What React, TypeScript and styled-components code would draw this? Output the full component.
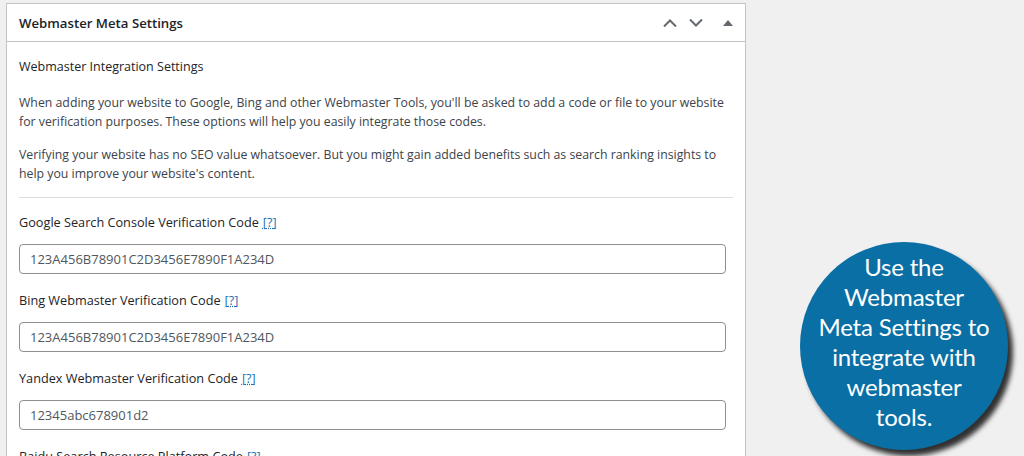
import React from 'react'
import styled, { createGlobalStyle } from 'styled-components'

const GlobalStyle = createGlobalStyle`
  html, body {
    margin: 0;
    padding: 0;
    background: #f0f0f1;
    font-family: "Open Sans", "Noto Sans", sans-serif;
    overflow: hidden;
  }
`

const Page = styled.div`
  display: flex;
  align-items: flex-start;
  width: 1024px;
  height: 456px;
  padding: 3px 0 0 6px;
  box-sizing: border-box;
  overflow: hidden;
`

const Panel = styled.div`
  width: 740px;
  flex-shrink: 0;
  background: #fff;
  border: 1px solid #c3c4c7;
  box-sizing: border-box;
`

const PanelHeader = styled.div`
  display: flex;
  align-items: center;
  height: 37px;
  padding: 0 5px 0 12px;
  border-bottom: 1px solid #c3c4c7;
`

const PanelTitle = styled.h2`
  flex: 1;
  margin: 0;
  font-size: 13.2px;
  font-weight: 600;
  color: #1d2327;
`

const HandleButton = styled.button<{ $gap?: number }>`
  display: flex;
  align-items: center;
  justify-content: center;
  width: 24px;
  height: 24px;
  padding: 0;
  margin-left: ${p => p.$gap ?? 0}px;
  border: 0;
  background: none;
  color: #646970;
`

const PanelBody = styled.div`
  padding: 16px 12px 0 12px;
  height: 412px;
  overflow: hidden;
`

const SectionTitle = styled.h3`
  margin: 0 0 17px 0;
  font-size: 12.5px;
  font-weight: 400;
  color: #1d2327;
  line-height: 18px;
`

const Para = styled.p`
  margin: 0 0 14px 0;
  font-size: 12.3px;
  line-height: 19px;
  color: #3c434a;
`

const Divider = styled.hr`
  border: 0;
  border-top: 1px solid #dcdcde;
  margin: 0 0 15px 0;
`

const Field = styled.div`
  display: flex;
  flex-direction: column;
  gap: 13px;
  margin-bottom: 17px;
`

const Label = styled.label`
  font-size: 12.7px;
  font-weight: 400;
  color: #1d2327;
  line-height: 18px;
`

const Help = styled.a`
  color: #2271b1;
  text-decoration: underline dotted;
  margin-left: 4px;
`

const TextInput = styled.input`
  width: 707px;
  height: 30px;
  box-sizing: border-box;
  padding: 0 10px;
  border: 1px solid #8c8f94;
  border-radius: 4px;
  font-family: "Open Sans", "Noto Sans", sans-serif;
  font-size: 13px;
  color: #50575e;
  background: #fff;
`

const Aside = styled.div`
  flex: 1;
  display: flex;
  padding: 239px 0 0 54px;
`

const Callout = styled.div`
  width: 208px;
  height: 208px;
  box-sizing: border-box;
  padding-bottom: 9px;
  border-radius: 50%;
  background: #0a6fa5;
  box-shadow: 5px 6px 5px rgba(0, 0, 0, 0.8);
  display: flex;
  align-items: center;
  justify-content: center;
  text-align: center;
  color: #fff;
  font-family: "Lato", "Open Sans", sans-serif;
  font-size: 24px;
  line-height: 30px;
  letter-spacing: -0.2px;
`

const Chevron = ({ up }: { up?: boolean }) => (
  <svg width="14" height="8" viewBox="0 0 14 8">
    <path
      d={up ? 'M1 7.5 L7 1.5 L13 7.5' : 'M1 0.5 L7 6.5 L13 0.5'}
      fill="none"
      stroke="currentColor"
      strokeWidth="2"
    />
  </svg>
)

const fields = [
  { label: 'Google Search Console Verification Code', value: '123A456B78901C2D3456E7890F1A234D' },
  { label: 'Bing Webmaster Verification Code', value: '123A456B78901C2D3456E7890F1A234D' },
  { label: 'Yandex Webmaster Verification Code', value: '12345abc678901d2' },
  { label: 'Baidu Search Resource Platform Code', value: '' },
]

export default function App() {
  return (
    <>
      <GlobalStyle />
      <Page>
        <Panel>
          <PanelHeader>
            <PanelTitle>Webmaster Meta Settings</PanelTitle>
            <HandleButton>
              <Chevron up />
            </HandleButton>
            <HandleButton $gap={2}>
              <Chevron />
            </HandleButton>
            <HandleButton $gap={8}>
              <svg width="10" height="6" viewBox="0 0 10 6">
                <path d="M5 0 L10 6 L0 6 Z" fill="currentColor" />
              </svg>
            </HandleButton>
          </PanelHeader>
          <PanelBody>
            <SectionTitle>Webmaster Integration Settings</SectionTitle>
            <Para>
              When adding your website to Google, Bing and other Webmaster Tools, you'll be asked to add a code or
              file to your website for verification purposes. These options will help you easily integrate those
              codes.
            </Para>
            <Para>
              Verifying your website has no SEO value whatsoever. But you might gain added benefits such as search
              ranking insights to help you improve your website's content.
            </Para>
            <Divider />
            {fields.map(f => (
              <Field key={f.label}>
                <Label>
                  {f.label}
                  <Help href="#">[?]</Help>
                </Label>
                <TextInput defaultValue={f.value} />
              </Field>
            ))}
          </PanelBody>
        </Panel>
        <Aside>
          <Callout>
            Use the
            <br />
            Webmaster
            <br />
            Meta Settings to
            <br />
            integrate with
            <br />
            webmaster
            <br />
            tools.
          </Callout>
        </Aside>
      </Page>
    </>
  )
}
